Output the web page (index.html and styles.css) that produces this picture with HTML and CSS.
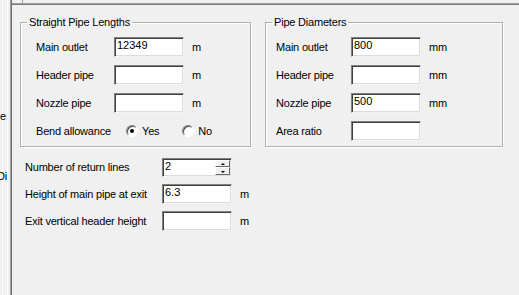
FILE: index.html
```html
<!DOCTYPE html>
<html lang="en">

<head>
    <meta charset="UTF-8">
    <title>Pipe Dimensions</title>
    <link rel="stylesheet" href="styles.css">
</head>

<body>
    <div class="window">
        <div class="side">
            <span class="side-text side-e">e</span>
            <span class="side-text side-di">Di</span>
        </div>

        <div class="panel">
            <div class="tabbar"><span class="tick"></span></div>

            <div class="content">
                <div class="groups">
                    <fieldset class="group group-lengths">
                        <legend>Straight Pipe Lengths</legend>
                        <div class="rows">
                            <div class="row">
                                <label>Main outlet</label>
                                <input type="text" class="field" value="12349">
                                <span class="unit">m</span>
                            </div>
                            <div class="row">
                                <label>Header pipe</label>
                                <input type="text" class="field" value="">
                                <span class="unit">m</span>
                            </div>
                            <div class="row">
                                <label>Nozzle pipe</label>
                                <input type="text" class="field" value="">
                                <span class="unit">m</span>
                            </div>
                            <div class="row">
                                <label>Bend allowance</label>
                                <span class="radio checked"></span><span class="radio-label">Yes</span>
                                <span class="radio"></span><span class="radio-label">No</span>
                            </div>
                        </div>
                    </fieldset>

                    <fieldset class="group group-diameters">
                        <legend>Pipe Diameters</legend>
                        <div class="rows">
                            <div class="row">
                                <label>Main outlet</label>
                                <input type="text" class="field" value="800">
                                <span class="unit">mm</span>
                            </div>
                            <div class="row">
                                <label>Header pipe</label>
                                <input type="text" class="field" value="">
                                <span class="unit">mm</span>
                            </div>
                            <div class="row">
                                <label>Nozzle pipe</label>
                                <input type="text" class="field" value="500">
                                <span class="unit">mm</span>
                            </div>
                            <div class="row">
                                <label>Area ratio</label>
                                <input type="text" class="field" value="">
                            </div>
                        </div>
                    </fieldset>
                </div>

                <div class="rows extra">
                    <div class="row">
                        <label>Number of return lines</label>
                        <div class="spinner">
                            <input type="text" class="spin-input" value="2">
                            <div class="spin-buttons">
                                <span class="spin-btn up"></span>
                                <span class="spin-btn down"></span>
                            </div>
                        </div>
                    </div>
                    <div class="row">
                        <label>Height of main pipe at exit</label>
                        <input type="text" class="field" value="6.3">
                        <span class="unit">m</span>
                    </div>
                    <div class="row">
                        <label>Exit vertical header height</label>
                        <input type="text" class="field" value="">
                        <span class="unit">m</span>
                    </div>
                </div>
            </div>
        </div>
    </div>
</body>

</html>
```

FILE: styles.css
```css
body {
    margin: 0;
    background: #f0f0f0;
    font-family: "Liberation Sans", Arial, sans-serif;
    font-size: 11px;
    letter-spacing: -0.2px;
    color: #000;
}

.window {
    display: flex;
    width: 519px;
    height: 295px;
    overflow: hidden;
}

/* left strip, cut off by the splitter */
.side {
    width: 10px;
    flex-shrink: 0;
    overflow: hidden;
    background:
        linear-gradient(#fcfcfc, #fcfcfc) 2px 0 / 1px 100% no-repeat,
        linear-gradient(#ffffff, #ffffff) 7px 0 / 1px 100% no-repeat,
        #f0f0f0;
}

.side-text {
    display: block;
    line-height: 13px;
    white-space: nowrap;
}

.side-e {
    margin-top: 110px;
}

.side-di {
    margin-top: 47px;
    margin-left: -3px;
}

.panel {
    flex: 1;
    border-left: 1px solid #a0a0a0;
    box-shadow: inset 1px 0 0 #6d6d6d;
    padding-left: 1px;
}

.tabbar {
    height: 3px;
    border-bottom: 1px solid #a0a0a0;
    box-shadow: 0 1px 0 #7c7c7c;
}

.tick {
    display: block;
    width: 1px;
    height: 3px;
    margin-left: 10px;
    background: #a0a0a0;
}

.content {
    padding: 12px 0 0 8px;
}

.groups {
    display: flex;
    gap: 14px;
}

.group {
    box-sizing: border-box;
    margin: 0;
    padding: 8px 0 5px 0;
    min-width: 0;
    border: 1px solid #b0b0b0;
    box-shadow: inset 1px 1px 0 #fff, 1px 1px 0 #fff;
}

.group legend {
    margin-left: 6px;
    padding: 0 2px;
    line-height: 13px;
}

.group-lengths {
    width: 231px;
}

.group-lengths .rows {
    padding-left: 15px;
}

.group-diameters {
    width: 238px;
}

.group-diameters .rows {
    padding-left: 10px;
}

.rows {
    display: flex;
    flex-direction: column;
    gap: 8px;
}

.row {
    display: flex;
    align-items: center;
    height: 20px;
}

.row label {
    flex-shrink: 0;
}

.group-lengths .row label {
    width: 78px;
}

.group-diameters .row label {
    width: 75px;
}

.field,
.spinner {
    box-sizing: border-box;
    width: 70px;
    height: 20px;
    margin: 0;
    padding: 0 2px 4px;
    background: #fff;
    border: 1px solid;
    border-color: #808080 #f4f4f4 #f4f4f4 #808080;
    box-shadow: inset 1px 1px 0 #404040, inset -1px -1px 0 #dcdcdc;
    font: inherit;
    letter-spacing: 0;
    color: #000;
    outline: none;
}

.unit {
    margin-left: 8px;
}

.radio {
    box-sizing: border-box;
    width: 12px;
    height: 12px;
    margin-left: 12px;
    border-radius: 50%;
    border: 1px solid;
    border-color: #808080 #fff #fff #808080;
    background: #fff;
    box-shadow: inset 1px 1px 0 #505050;
    position: relative;
}

.radio + .radio-label {
    margin-left: 4px;
}

.radio-label + .radio {
    margin-left: 23px;
}

.radio.checked::after {
    content: "";
    position: absolute;
    left: 3px;
    top: 3px;
    width: 4px;
    height: 4px;
    border-radius: 50%;
    background: #000;
}

.extra {
    margin-top: 10px;
    padding-left: 5px;
    gap: 7px;
}

.extra .row label {
    width: 137px;
}

.spinner {
    display: flex;
    padding: 0;
    height: 19px;
}

.spin-input {
    flex: 1;
    min-width: 0;
    border: none;
    margin: 0;
    padding: 0 2px 2px;
    font: inherit;
    letter-spacing: 0;
    background: transparent;
    outline: none;
}

.spin-buttons {
    display: flex;
    flex-direction: column;
    width: 15px;
    padding: 1px 1px 1px 0;
}

.spin-btn {
    flex: 1;
    position: relative;
    background: #f0f0f0;
    border: 1px solid;
    border-color: #fff #696969 #696969 #fff;
}

.spin-btn::after {
    content: "";
    position: absolute;
    left: 5px;
    width: 0;
    height: 0;
    border-left: 2px solid transparent;
    border-right: 2px solid transparent;
}

.spin-btn.up::after {
    top: 2px;
    border-bottom: 2px solid #000;
}

.spin-btn.down::after {
    top: 3px;
    border-top: 2px solid #000;
}
```
